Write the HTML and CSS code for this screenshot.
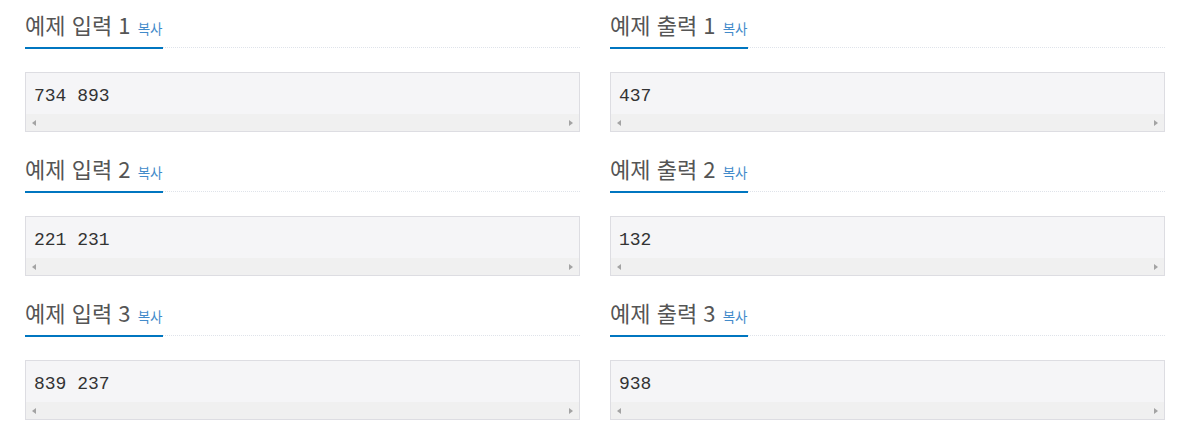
FILE: index.html
```html
<!DOCTYPE html>
<html lang="ko">
<head>
<meta charset="utf-8">
<link rel="stylesheet" href="styles.css">
</head>
<body>
<div class="samples">
  <section class="sample">
    <div class="headline"><h2>예제 입력 1 <a class="copy">복사</a></h2></div>
    <div class="data"><pre>734 893</pre><div class="scroll"><span class="arr left"></span><span class="arr right"></span></div></div>
  </section>
  <section class="sample">
    <div class="headline"><h2>예제 출력 1 <a class="copy">복사</a></h2></div>
    <div class="data"><pre>437</pre><div class="scroll"><span class="arr left"></span><span class="arr right"></span></div></div>
  </section>
  <section class="sample">
    <div class="headline"><h2>예제 입력 2 <a class="copy">복사</a></h2></div>
    <div class="data"><pre>221 231</pre><div class="scroll"><span class="arr left"></span><span class="arr right"></span></div></div>
  </section>
  <section class="sample">
    <div class="headline"><h2>예제 출력 2 <a class="copy">복사</a></h2></div>
    <div class="data"><pre>132</pre><div class="scroll"><span class="arr left"></span><span class="arr right"></span></div></div>
  </section>
  <section class="sample">
    <div class="headline"><h2>예제 입력 3 <a class="copy">복사</a></h2></div>
    <div class="data"><pre>839 237</pre><div class="scroll"><span class="arr left"></span><span class="arr right"></span></div></div>
  </section>
  <section class="sample">
    <div class="headline"><h2>예제 출력 3 <a class="copy">복사</a></h2></div>
    <div class="data"><pre>938</pre><div class="scroll"><span class="arr left"></span><span class="arr right"></span></div></div>
  </section>
</div>
</body>
</html>
```
FILE: styles.css
```css
html, body {
  margin: 0;
  padding: 0;
  background: #fff;
}
body {
  font-family: "Open Sans", "Noto Sans CJK KR", sans-serif;
  color: #555;
}
.samples {
  display: grid;
  grid-template-columns: 555px 555px;
  column-gap: 30px;
  padding-left: 25px;
}
.sample {
  margin-bottom: 12px;
}
.headline {
  display: flex;
  align-items: flex-end;
  height: 47px;
  border-bottom: 1px dotted #dfe3ea;
  margin-bottom: 24px;
}
.headline h2 {
  margin: 0 0 -2px 0;
  padding: 0 0 5px 0;
  font-family: "Noto Sans CJK KR", sans-serif;
  font-weight: 400;
  font-size: 22px;
  line-height: 28px;
  color: #555;
  border-bottom: 2px solid #0076c0;
  white-space: nowrap;
}
.copy {
  font-size: 13.5px;
  color: #428bca;
  text-decoration: none;
  margin-left: 1px;
}
.data {
  border: 1px solid #dddde2;
  background: #f5f5f7;
  height: 58px;
  display: flex;
  flex-direction: column;
}
.data pre {
  flex: 1;
  margin: 0;
  padding: 11px 0 0 8px;
  font-family: "Liberation Mono", monospace;
  font-size: 18px;
  line-height: 24px;
  color: #333;
}
.scroll {
  height: 17px;
  background: #f0f0f0;
  display: flex;
  justify-content: space-between;
  align-items: center;
  padding: 0 6px;
}
.arr {
  width: 0;
  height: 0;
  border-top: 3.5px solid transparent;
  border-bottom: 3.5px solid transparent;
}
.arr.left {
  border-right: 4px solid #a3a3a3;
}
.arr.right {
  border-left: 4px solid #a3a3a3;
}
```
